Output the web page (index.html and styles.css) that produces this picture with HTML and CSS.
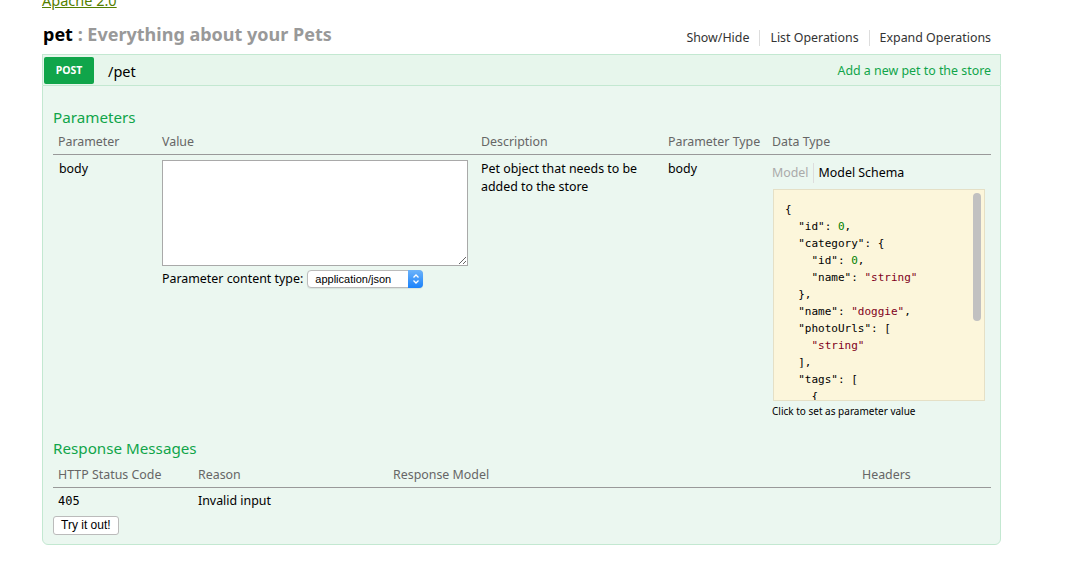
FILE: index.html
```html
<!DOCTYPE html>
<html>
<head>
<meta charset="utf-8">
<link rel="stylesheet" href="styles.css">
</head>
<body>
<div class="page">
  <div class="license"><a href="#">Apache 2.0</a></div>
  <div class="resource-head">
    <h2 class="resource-title"><span class="res-name">pet</span> <span class="res-desc">: Everything about your Pets</span></h2>
    <ul class="res-links">
      <li><a href="#">Show/Hide</a></li>
      <li><a href="#">List Operations</a></li>
      <li><a href="#">Expand Operations</a></li>
    </ul>
  </div>
  <div class="operation">
    <div class="op-head">
      <span class="verb">POST</span>
      <span class="path">/pet</span>
      <span class="summary">Add a new pet to the store</span>
    </div>
    <div class="op-content">
      <h4 class="section-title">Parameters</h4>
      <table class="params">
        <thead>
          <tr>
            <th class="c-param">Parameter</th>
            <th class="c-value">Value</th>
            <th class="c-desc">Description</th>
            <th class="c-ptype">Parameter Type</th>
            <th class="c-dtype">Data Type</th>
          </tr>
        </thead>
        <tbody>
          <tr>
            <td class="c-param">body</td>
            <td class="c-value">
              <textarea class="body-input"></textarea>
              <div class="content-type">
                <span>Parameter content type:</span>
                <span class="select-wrap">
                  <select class="ct-select"><option>application/json</option></select>
                  <span class="select-btn"><svg width="8" height="12" viewBox="0 0 8 12"><path d="M1.5 4.5 L4 2 L6.5 4.5 M1.5 7.5 L4 10 L6.5 7.5" fill="none" stroke="#fff" stroke-width="1.3"/></svg></span>
                </span>
              </div>
            </td>
            <td class="c-desc">Pet object that needs to be added to the store</td>
            <td class="c-ptype">body</td>
            <td class="c-dtype">
              <div class="model-tabs"><span class="tab-off">Model</span><span class="tab-on">Model Schema</span></div>
              <div class="schema-box">
                <pre class="schema">{
  "id": <span class="n">0</span>,
  "category": {
    "id": <span class="n">0</span>,
    "name": <span class="s">"string"</span>
  },
  "name": <span class="s">"doggie"</span>,
  "photoUrls": [
    <span class="s">"string"</span>
  ],
  "tags": [
    {
      "id": <span class="n">0</span>,
      "name": <span class="s">"string"</span>
    }
  ],
  "status": <span class="s">"available"</span>
}</pre>
                <span class="scroll-thumb"></span>
              </div>
              <div class="hint">Click to set as parameter value</div>
            </td>
          </tr>
        </tbody>
      </table>
      <h4 class="section-title resp-title">Response Messages</h4>
      <table class="responses">
        <thead>
          <tr>
            <th class="r-code">HTTP Status Code</th>
            <th class="r-reason">Reason</th>
            <th class="r-model">Response Model</th>
            <th class="r-headers">Headers</th>
          </tr>
        </thead>
        <tbody>
          <tr>
            <td class="r-code code">405</td>
            <td class="r-reason">Invalid input</td>
            <td class="r-model"></td>
            <td class="r-headers"></td>
          </tr>
        </tbody>
      </table>
      <button class="try-btn">Try it out!</button>
    </div>
  </div>
</div>
</body>
</html>
```
FILE: styles.css
```css
html, body {
  margin: 0;
  padding: 0;
  background: #fff;
}
body {
  font-family: "Noto Sans", "Open Sans", sans-serif;
  font-size: 12.4px;
  color: #000;
}
.page {
  width: 959px;
  margin-left: 42px;
}
.license {
  margin-top: -9px;
  height: 19px;
  font-size: 14.5px;
  line-height: 19px;
}
.license a {
  color: #547f00;
  text-decoration: underline;
}
.resource-head {
  display: flex;
  justify-content: space-between;
  align-items: center;
  height: 36px;
  margin-top: 6px;
}
.resource-title {
  margin: 0;
  font-size: 18px;
  font-weight: bold;
  line-height: 24px;
  padding-left: 1px;
}
.res-name { color: #000; }
.res-desc { color: #999; }
.res-links {
  list-style: none;
  margin: 0;
  padding: 0;
  display: flex;
  padding-top: 8px;
  padding-right: 10px;
}
.res-links li {
  padding: 0 10px;
  border-left: 1px solid #ddd;
  line-height: 16px;
}
.res-links li:first-child { border-left: none; }
.res-links li:last-child { padding-right: 0; }
.res-links a {
  color: #333;
  text-decoration: none;
  font-size: 12.4px;
}
.operation {
  margin-top: 2px;
}
.op-head {
  display: flex;
  align-items: center;
  height: 29px;
  background: #e7f6ec;
  border: 1px solid #c3e8d1;
  border-bottom: none;
  padding: 1px 9px 0 1px;
}
.verb {
  background: #10a54a;
  color: #fff;
  font-size: 10.5px;
  font-weight: bold;
  width: 50px;
  height: 27px;
  line-height: 27px;
  text-align: center;
  border-radius: 2px;
  text-transform: uppercase;
}
.path {
  margin-left: 14px;
  font-size: 14.5px;
  flex: 1;
}
.summary {
  color: #10a54a;
  font-size: 12.4px;
}
.op-content {
  background: #ebf7f0;
  border: 1px solid #c3e8d1;
  border-radius: 0 0 6px 6px;
  padding: 20px 9px 9px 10px;
}
.section-title {
  margin: 0;
  color: #10a54a;
  font-size: 15.2px;
  font-weight: normal;
  line-height: 22px;
}
table {
  border-collapse: collapse;
  width: 100%;
}
th {
  text-align: left;
  font-weight: normal;
  color: #666;
  font-size: 12.4px;
  padding: 5px 5px 3px 5px;
  line-height: 18px;
  border-bottom: 1px solid #999;
  white-space: nowrap;
}
td {
  vertical-align: top;
  padding: 4px 5px 0 5px;
  font-size: 12.4px;
  line-height: 18px;
}
.params th.c-param { width: 92px; }
.params td.c-param { padding-left: 6px; }
.params td { padding-top: 5px; }
.params .c-value { width: 309px; padding-left: 7px; }
.params .c-desc { width: 177px; }
.params .c-ptype { width: 94px; }
.params .c-dtype { width: auto; }
.body-input {
  display: block;
  box-sizing: border-box;
  width: 306px;
  height: 106px;
  margin: 0;
  border: 1px solid #a9a9a9;
  background: #fff;
  resize: vertical;
}
.content-type {
  display: flex;
  align-items: center;
  margin-top: 4px;
  gap: 4px;
}
.select-wrap {
  position: relative;
  display: inline-block;
  height: 18px;
}
.ct-select {
  appearance: none;
  -webkit-appearance: none;
  display: block;
  width: 116px;
  height: 18px;
  border: 1px solid #bbb;
  border-radius: 4px;
  background: #fff;
  font-family: "Liberation Sans", Arial, sans-serif;
  font-size: 11px;
  padding: 0 0 0 7px;
  color: #000;
  box-shadow: 0 1px 1px rgba(0,0,0,0.08);
}
.select-btn {
  position: absolute;
  right: 0;
  top: 0;
  width: 15px;
  height: 18px;
  background: linear-gradient(#6cb3fa, #1a82fb);
  border-radius: 0 4px 4px 0;
  display: flex;
  align-items: center;
  justify-content: center;
}
.model-tabs {
  display: flex;
  align-items: center;
  padding-top: 4px;
  height: 18px;
}
.tab-off {
  color: #aaa;
  padding-right: 4px;
  border-right: 1px solid #ddd;
  line-height: 20px;
}
.tab-on {
  color: #000;
  padding-left: 5px;
}
.schema-box {
  position: relative;
  margin-top: 7px;
  margin-left: 1px;
  width: 210px;
  height: 210px;
  background: #fcf6db;
  border: 1px solid #e5e0c6;
  overflow: hidden;
}
.scroll-thumb {
  position: absolute;
  right: 3px;
  top: 3px;
  width: 8px;
  height: 128px;
  background: #c1c1c1;
  border-radius: 4px;
}
.schema {
  margin: 0;
  padding: 11px 11px;
  font-family: "DejaVu Sans Mono", monospace;
  font-size: 11px;
  line-height: 17px;
  color: #000;
}
.schema .n { color: #008000; }
.schema .s { color: #800020; }
.hint {
  font-size: 10px;
  margin-top: 3px;
  line-height: 14px;
}
.resp-title {
  margin-top: 19px;
  padding-bottom: 2px;
}
.responses th.r-code { width: 130px; }
.responses th.r-reason { width: 185px; }
.responses th.r-model { width: 459px; }
.responses th { padding-top: 5px; }
.responses td { padding-top: 4px; }
.code {
  font-family: "DejaVu Sans Mono", monospace;
  font-size: 12px;
  font-weight: normal;
}
.try-btn {
  margin-top: 6px;
  font-family: "Liberation Sans", Arial, sans-serif;
  font-size: 12px;
  background: #fff;
  border: 1px solid #bbb;
  border-radius: 3px;
  padding: 0 7px;
  height: 19px;
  line-height: 15px;
  color: #000;
}
```
